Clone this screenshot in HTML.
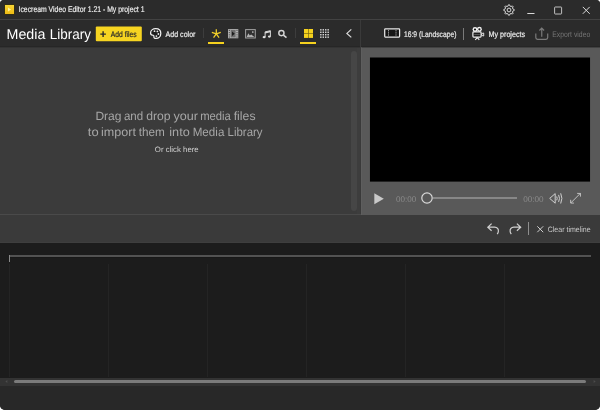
<!DOCTYPE html>
<html>
<head>
<meta charset="utf-8">
<title>Icecream Video Editor 1.21 - My project 1</title>
<style>
*{margin:0;padding:0;box-sizing:border-box}
html,body{width:600px;height:410px;overflow:hidden;background:#fff}
body{font-family:"Liberation Sans",sans-serif;position:relative;color:#f0f0f0}
#win{position:absolute;left:0;top:0;width:600px;height:410px;background:#2b2b2b;border-radius:4px 4px 5px 5px;overflow:hidden;will-change:transform}
.abs{position:absolute}
.t{text-rendering:geometricPrecision;position:absolute;left:0;top:0;white-space:nowrap;line-height:1;transform-origin:0 0}
svg{position:absolute;overflow:visible}
#titlebar{left:0;top:0;width:600px;height:19px;background:#2b2b2b}
#tsep{left:0;top:19px;width:600px;height:1px;background:#424242}
#toolbar{left:0;top:20px;width:600px;height:27px;background:#2b2b2b;border-bottom:1px solid #262626}
#media{left:0;top:47px;width:360px;height:168px;background:#3b3b3b;border-top:1px solid #333}
#mscroll{left:350.5px;top:50.5px;width:6px;height:160.5px;background:#464646;border-radius:3px}
#mgap{left:357px;top:48px;width:3px;height:166px;background:#3d3d3d}
#vdiv{left:360px;top:20px;width:1px;height:194px;background:#3a3a3a}
#preview{left:361px;top:47px;width:239px;height:168px;background:#595959;border-top:1px solid #424242;border-left:1px solid #5e5e5e}
#hsep{left:0;top:214px;width:361px;height:1px;background:#4a4a4a}
#tltool{left:0;top:215px;width:600px;height:28px;background:#3a3a3a;border-bottom:1px solid #3e3e3e}
#timeline{left:0;top:243px;width:600px;height:134.5px;background:#1c1c1c}
#ruler{left:9px;top:255px;width:581.6px;height:2px;background:#525252;box-shadow:0 1px 0 #181818}
#rtick{left:9px;top:255px;width:1px;height:7px;background:#8a8a8a}
.gl{position:absolute;top:264px;width:1px;height:113px;background:#242424}
#hscroll{left:0;top:377.5px;width:600px;height:8px;background:#333}
#hthumb{left:14.3px;top:379.7px;width:572px;height:3.6px;background:#7b7b7b;border-radius:2px}
#bottom{left:0;top:385.5px;width:600px;height:24.5px;background:#282828}
#appicon{left:4.8px;top:4.8px;width:9.4px;height:9.4px;background:linear-gradient(#f7d536,#eebb14);box-shadow:0 0 0 0.6px #3a3208}
.ul{position:absolute;height:2px;background:#f5d11e;top:42px}
.vs{position:absolute;width:1px}
#t-title{font-size:8.3px;color:#f0f0f0;-webkit-text-stroke:0.15px #f0f0f0;transform:translate(18.53px,5.0px) scaleX(0.826)}
.w-ml{font-size:14.2px;color:#fff}
.w-d{font-size:12px;color:#a6a6a6}
#t-d3{font-size:7.8px;color:#d2d2d2;transform:translate(154.86px,146px) scaleX(1.002)}
#t-af{font-size:8.1px;color:#2a2a2a;-webkit-text-stroke:0.2px currentColor;transform:translate(110.84px,30.5px) scaleX(0.833)}
#t-ac{font-size:8.1px;color:#ececec;-webkit-text-stroke:0.2px currentColor;transform:translate(165.60px,30.5px) scaleX(0.872)}
#t-ar{font-size:8.1px;color:#e8e8e8;-webkit-text-stroke:0.2px currentColor;transform:translate(403.90px,30.5px) scaleX(0.834)}
#t-mp{font-size:8.1px;color:#ececec;-webkit-text-stroke:0.2px currentColor;transform:translate(488.51px,30.5px) scaleX(0.883)}
#t-ev{font-size:8.1px;color:#757575;transform:translate(552.16px,30.5px) scaleX(0.847)}
#t-t1{font-size:8.4px;color:#8c8c8c;transform:translate(396.00px,194.5px) scaleX(0.959)}
#t-t2{font-size:8.4px;color:#8c8c8c;transform:translate(523.19px,194.5px) scaleX(0.976)}
#t-ct{font-size:7.8px;color:#c8c8c8;transform:translate(547.73px,225.5px) scaleX(0.900)}
</style>
</head>
<body>
<div id="win">
  <div id="titlebar" class="abs"></div>
  <div id="tsep" class="abs"></div>
  <div id="toolbar" class="abs"></div>
  <div id="media" class="abs"></div>
  <div id="mscroll" class="abs"></div>
  <div id="mgap" class="abs"></div>
  <div id="preview" class="abs"></div>
  <div id="vdiv" class="abs"></div>
  <svg id="video" style="left:369px;top:56px" width="222" height="127" viewBox="0 0 222 127"><rect x="0.95" y="1.5" width="220.1" height="124.1" fill="#000"/></svg>
  <div id="hsep" class="abs"></div>
  <div id="tltool" class="abs"></div>
  <div id="timeline" class="abs"></div>
  <div class="gl" style="left:9px"></div>
  <div class="gl" style="left:108px"></div>
  <div class="gl" style="left:207px"></div>
  <div class="gl" style="left:306px"></div>
  <div class="gl" style="left:405px"></div>
  <div class="gl" style="left:504px"></div>
  <div id="ruler" class="abs"></div>
  <div id="rtick" class="abs"></div>
  <div id="hscroll" class="abs"></div>
  <div id="hthumb" class="abs"></div>
  <div id="bottom" class="abs"></div>

  <!-- title bar -->
  <div id="appicon" class="abs"></div>
  <svg style="left:5px;top:5px" width="9" height="9" viewBox="0 0 9 9"><path d="M3 2.4 L6 4.5 L3 6.6 Z" fill="#fff3a0"/></svg>
  <span id="t-title" class="t">Icecream Video Editor 1.21 - My project 1</span>

  <!-- window controls -->
  <svg id="i-gear" style="left:503.3px;top:3.9px" width="12" height="12" viewBox="0 0 12 12" fill="none" stroke="#d8d8d8" stroke-width="1">
    <circle cx="6" cy="6" r="1.9"/>
    <path d="M11.28 5.59 L11.28 6.41 L9.85 7.09 L9.49 7.95 L10.02 9.45 L9.45 10.02 L7.95 9.49 L7.09 9.85 L6.41 11.28 L5.59 11.28 L4.91 9.85 L4.05 9.49 L2.55 10.02 L1.98 9.45 L2.51 7.95 L2.15 7.09 L0.72 6.41 L0.72 5.59 L2.15 4.91 L2.51 4.05 L1.98 2.55 L2.55 1.98 L4.05 2.51 L4.91 2.15 L5.59 0.72 L6.41 0.72 L7.09 2.15 L7.95 2.51 L9.45 1.98 L10.02 2.55 L9.49 4.05 L9.85 4.91 Z" stroke-linejoin="round"/>
  </svg>
  <svg id="i-min" style="left:527px;top:13px" width="8" height="1" viewBox="0 0 8 1"><rect x="0.3" y="0" width="7.2" height="1" fill="#d8d8d8"/></svg>
  <svg id="i-max" style="left:554px;top:6px" width="9" height="9" viewBox="0 0 9 9"><rect x="0.6" y="1" width="7" height="7" fill="none" stroke="#d0d0d0" stroke-width="0.9" rx="0.6"/></svg>
  <svg id="i-close" style="left:582px;top:6px" width="9" height="9" viewBox="0 0 9 9"><path d="M0.8 0.9 L7.7 7.8 M7.7 0.9 L0.8 7.8" stroke="#dcdcdc" stroke-width="1" fill="none"/></svg>

  <!-- toolbar -->
  <div id="t-ml"><span class="t w-ml" style="transform:translate(6.51px,28px) scaleX(1.004)">Media</span> <span class="t w-ml" style="transform:translate(49.84px,28px) scaleX(0.948)">Library</span></div>
  <svg id="addfiles" style="left:95px;top:26px" width="48" height="16" viewBox="0 0 48 16"><rect x="0.8" y="0.5" width="46" height="14.7" rx="1" fill="#f6d421"/></svg>
  <svg id="i-plus" style="left:100px;top:31px" width="7" height="7" viewBox="0 0 7 7"><path d="M3.1 0.3 V6 M0.3 3.15 H5.9" stroke="#2a2a2a" stroke-width="1.4" fill="none"/></svg>
  <span id="t-af" class="t">Add files</span>

  <svg id="i-pal" style="left:150px;top:28px" width="12" height="12" viewBox="0 0 12 12">
    <path d="M5.8 0.6 C9 0.6 10.8 2.8 10.8 5.5 C10.8 8.3 8.7 10.4 6 10.4 C4.5 10.4 3.7 9.7 3.9 8.6 C4.1 7.5 3.3 7 2.3 7 C1.1 7 0.6 6 0.6 5 C0.6 2.6 2.8 0.6 5.8 0.6 Z" fill="#1e1e1e" stroke="#f0f0f0" stroke-width="1.25"/>
    <circle cx="4.5" cy="3.2" r="0.9" fill="#e8e8e8"/><circle cx="7.4" cy="3.4" r="0.9" fill="#e8e8e8"/>
    <circle cx="8.4" cy="6" r="0.9" fill="#e8e8e8"/><circle cx="6.4" cy="8.1" r="0.9" fill="#e8e8e8"/>
  </svg>
  <span id="t-ac" class="t">Add color</span>

  <div class="vs" style="left:203px;top:28px;height:10px;background:#3d3d3d"></div>
  <svg id="i-star" style="left:210px;top:28px" width="13" height="11" viewBox="0 0 13 11" fill="none" stroke="#f3d02a" stroke-width="1.25"><path d="M6.30 5.90 L6.30 1.20 M6.30 5.90 L10.77 4.45 M6.30 5.90 L9.06 9.70 M6.30 5.90 L3.54 9.70 M6.30 5.90 L1.83 4.45"/></svg>
  <div class="ul" style="left:208px;width:16px"></div>

  <svg id="i-film" style="left:228px;top:29px" width="11" height="10" viewBox="0 0 11 10">
    <rect x="0" y="0.1" width="10.3" height="9.2" fill="#b4b4b4"/>
    <rect x="2.7" y="1" width="4.9" height="7.4" fill="#6e6e6e"/>
    <path d="M4 2.5 L6.8 4.7 L4 6.9 Z" fill="#1c1c1c"/>
    <path d="M1.3 0.9 V8.8 M9 0.9 V8.8" stroke="#444" stroke-width="1" stroke-dasharray="1.1 1.1"/>
  </svg>
  <svg id="i-img" style="left:245px;top:29px" width="11" height="10" viewBox="0 0 11 10">
    <rect x="0.6" y="0.6" width="9.7" height="8.4" fill="#303030" stroke="#a0a0a0" stroke-width="1"/>
    <path d="M1.6 7.9 L3.4 4.3 L4.8 6.6 L6.2 5.4 L9.4 7.9 Z" fill="#b0b0b0"/>
    <circle cx="7.8" cy="3" r="0.85" fill="#c4c4c4"/>
  </svg>
  <svg id="i-mus" style="left:262.3px;top:29.7px" width="9" height="9" viewBox="0 0 9 9">
    <path d="M3.1 7 V1.9 L8.4 0.7 V6.4" fill="none" stroke="#d8d8d8" stroke-width="1"/>
    <path d="M3.1 1.9 L8.4 0.7 V2.2 L3.1 3.4 Z" fill="#d8d8d8"/>
    <ellipse cx="2.1" cy="7.2" rx="1.5" ry="1.15" fill="#e0e0e0"/>
    <ellipse cx="7.4" cy="6.6" rx="1.5" ry="1.15" fill="#e0e0e0"/>
  </svg>
  <svg id="i-srch" style="left:278px;top:30px" width="9" height="9" viewBox="0 0 9 9" fill="none" stroke="#d4d4d4">
    <circle cx="3.4" cy="3.1" r="2.6" stroke-width="1.45"/>
    <path d="M5.4 5.1 L8.5 7.7" stroke-width="1.6"/>
  </svg>
  <div class="vs" style="left:295px;top:28px;height:10px;background:#3d3d3d"></div>

  <svg id="i-grid" style="left:303.8px;top:29.3px" width="9" height="8.9" viewBox="0 0 9 8.9">
    <rect x="0" y="0" width="9" height="8.9" fill="#7d6a14"/>
    <rect x="0" y="0" width="4.15" height="4.1" fill="#f5d11e"/><rect x="4.85" y="0" width="4.15" height="4.1" fill="#f5d11e"/>
    <rect x="0" y="4.8" width="4.15" height="4.1" fill="#f5d11e"/><rect x="4.85" y="4.8" width="4.15" height="4.1" fill="#f5d11e"/>
  </svg>
  <div class="ul" style="left:300px;width:16px"></div>
  <svg id="i-sgrid" style="left:319.5px;top:29.2px" width="9" height="9" viewBox="0 0 9 9" fill="#d6d6d6"><rect x="0.10" y="0.10" width="1.45" height="1.45"/><rect x="2.55" y="0.10" width="1.45" height="1.45"/><rect x="5.00" y="0.10" width="1.45" height="1.45"/><rect x="7.45" y="0.10" width="1.45" height="1.45"/><rect x="0.10" y="2.55" width="1.45" height="1.45"/><rect x="2.55" y="2.55" width="1.45" height="1.45"/><rect x="5.00" y="2.55" width="1.45" height="1.45"/><rect x="7.45" y="2.55" width="1.45" height="1.45"/><rect x="0.10" y="5.00" width="1.45" height="1.45"/><rect x="2.55" y="5.00" width="1.45" height="1.45"/><rect x="5.00" y="5.00" width="1.45" height="1.45"/><rect x="7.45" y="5.00" width="1.45" height="1.45"/><rect x="0.10" y="7.45" width="1.45" height="1.45"/><rect x="2.55" y="7.45" width="1.45" height="1.45"/><rect x="5.00" y="7.45" width="1.45" height="1.45"/><rect x="7.45" y="7.45" width="1.45" height="1.45"/></svg>
  <svg id="i-chev" style="left:345.6px;top:29.4px" width="6" height="9" viewBox="0 0 6 9"><path d="M5.3 0.4 L0.9 4.4 L5.3 8.4" fill="none" stroke="#dcdcdc" stroke-width="1.2"/></svg>

  <svg id="i-asp" style="left:384px;top:28.2px" width="17" height="10" viewBox="0 0 17 10" fill="none" stroke="#e8e8e8">
    <rect x="0.7" y="0.8" width="14.9" height="8.2" rx="0.7" stroke-width="1.25" fill="#161616"/>
    <path d="M4.5 2.3 V8 M12 2.3 V8" stroke-width="1" stroke-dasharray="1 1.1" stroke="#d0d0d0"/>
  </svg>
  <span id="t-ar" class="t">16:9 (Landscape)</span>
  <div class="vs" style="left:463px;top:27.5px;height:12px;background:#7a7a7a"></div>

  <svg id="i-cam" style="left:472px;top:27px" width="13" height="14" viewBox="0 0 13 14">
    <circle cx="3" cy="2.5" r="2.45" fill="#f0f0f0"/><circle cx="7.4" cy="2.3" r="2.45" fill="#f0f0f0"/>
    <circle cx="3" cy="2.5" r="1.1" fill="#1a1a1a"/><circle cx="7.4" cy="2.3" r="1.1" fill="#1a1a1a"/>
    <rect x="0.9" y="4.9" width="8.2" height="5.2" rx="0.8" fill="#1c1c1c" stroke="#f0f0f0" stroke-width="1.2"/>
    <path d="M2.2 7.5 H7.8" stroke="#707070" stroke-width="0.7"/>
    <path d="M9.6 6.6 L11.7 6 V9 L9.6 8.4 Z" fill="#2a2a2a" stroke="#f0f0f0" stroke-width="0.9" stroke-linejoin="round"/>
    <path d="M5.3 10.6 L3.2 12.8 M5.3 10.6 L7.3 12.8" stroke="#f0f0f0" stroke-width="1.1" fill="none"/>
  </svg>
  <span id="t-mp" class="t">My projects</span>

  <svg id="i-exp" style="left:535px;top:27px" width="14" height="14" viewBox="0 0 14 14" fill="none" stroke="#7a7a7a" stroke-width="1.2">
    <path d="M0.8 6.6 V10.6 Q0.8 12.3 2.5 12.3 H11 Q12.7 12.3 12.7 10.6 V6.6"/>
    <path d="M6.75 9.8 V1.2 M4.4 3.5 L6.75 1.1 L9.1 3.5"/>
  </svg>
  <span id="t-ev" class="t">Export video</span>

  <!-- drop zone text -->
  <div id="t-d1"><span class="t w-d" style="transform:translate(95.42px,110px) scaleX(1.003)">Drag</span> <span class="t w-d" style="transform:translate(123.95px,110px) scaleX(0.962)">and</span> <span class="t w-d" style="transform:translate(146.21px,110px) scaleX(1.015)">drop</span> <span class="t w-d" style="transform:translate(173.51px,110px) scaleX(1.051)">your</span> <span class="t w-d" style="transform:translate(200.15px,110px) scaleX(0.939)">media</span> <span class="t w-d" style="transform:translate(233.70px,110px) scaleX(1.022)">files</span></div>
  <div id="t-d2"><span class="t w-d" style="transform:translate(87.83px,126px) scaleX(1.081)">to</span> <span class="t w-d" style="transform:translate(100.93px,126px) scaleX(1.048)">import</span> <span class="t w-d" style="transform:translate(138.77px,126px) scaleX(0.980)">them</span> <span class="t w-d" style="transform:translate(169.30px,126px) scaleX(1.057)">into</span> <span class="t w-d" style="transform:translate(192.68px,126px) scaleX(0.969)">Media</span> <span class="t w-d" style="transform:translate(227.58px,126px) scaleX(0.953)">Library</span></div>
  <span id="t-d3" class="t">Or click here</span>

  <!-- player -->
  <svg id="i-play" style="left:374px;top:193px" width="10" height="12" viewBox="0 0 10 12"><path d="M0.3 0.3 L9.8 5.8 L0.3 11.3 Z" fill="#c9c9c9"/></svg>
  <span id="t-t1" class="t">00:00</span>
  <div class="abs" style="left:433px;top:197.3px;width:83.6px;height:1.4px;background:#878787"></div>
  <svg id="i-knob" style="left:421px;top:192px" width="12" height="12" viewBox="0 0 12 12"><circle cx="6" cy="6" r="5.2" fill="#585858" stroke="#dadada" stroke-width="1.2"/></svg>
  <span id="t-t2" class="t">00:00</span>
  <svg id="i-vol" style="left:549.3px;top:193px" width="14" height="11" viewBox="0 0 14 11" fill="none" stroke="#d0d0d0" stroke-width="1">
    <path d="M0.7 5.4 L6.2 0.6 V10.2 Z" stroke-linejoin="round"/>
    <path d="M7.7 3.5 Q8.7 5.4 7.7 7.3 M9.6 1.9 Q11.4 5.4 9.6 8.9 M11.7 0.3 Q14.1 5.4 11.7 10.5"/>
  </svg>
  <svg id="i-full" style="left:569.8px;top:193px" width="11.4" height="11.2" viewBox="0 0 12 12" fill="none" stroke="#cdcdcd" stroke-width="0.95">
    <path d="M0.8 10.6 L11 0.4 M7.6 0.45 H11.1 V3.9 M0.6 7.3 V10.8 H4.1"/>
  </svg>

  <!-- timeline toolbar -->
  <svg id="i-undo" style="left:486.6px;top:223.2px" width="13" height="12" viewBox="0 0 13 12" fill="none" stroke="#cfcfcf" stroke-width="1.2">
    <path d="M4.6 0.6 L0.8 4.2 L4.6 7.8 M1 4.2 H7.6 Q11.6 4.6 11.4 8.2 Q11.3 9.8 10.2 11.2"/>
  </svg>
  <svg id="i-redo" style="left:509px;top:223.2px" width="13" height="12" viewBox="0 0 13 12" fill="none" stroke="#cfcfcf" stroke-width="1.2">
    <path d="M7.9 0.6 L11.7 4.2 L7.9 7.8 M11.5 4.2 H4.9 Q0.9 4.6 1.1 8.2 Q1.2 9.8 2.3 11.2"/>
  </svg>
  <div class="vs" style="left:528px;top:222px;height:13px;background:#8e8e8e"></div>
  <svg id="i-clr" style="left:536.9px;top:226.1px" width="7" height="7" viewBox="0 0 7 7"><path d="M0.3 0.3 L6.2 6.2 M6.2 0.3 L0.3 6.2" stroke="#cfcfcf" stroke-width="1" fill="none"/></svg>
  <span id="t-ct" class="t">Clear timeline</span>

  <!-- scrollbar arrows -->
  <svg style="left:4.8px;top:380.2px" width="3" height="3" viewBox="0 0 3 3"><path d="M2.4 0 L0.4 1.5 L2.4 3 Z" fill="#4c4c4c"/></svg>
  <svg style="left:592.6px;top:380.2px" width="3" height="3" viewBox="0 0 3 3"><path d="M0.6 0 L2.6 1.5 L0.6 3 Z" fill="#4c4c4c"/></svg>
</div>
</body>
</html>
